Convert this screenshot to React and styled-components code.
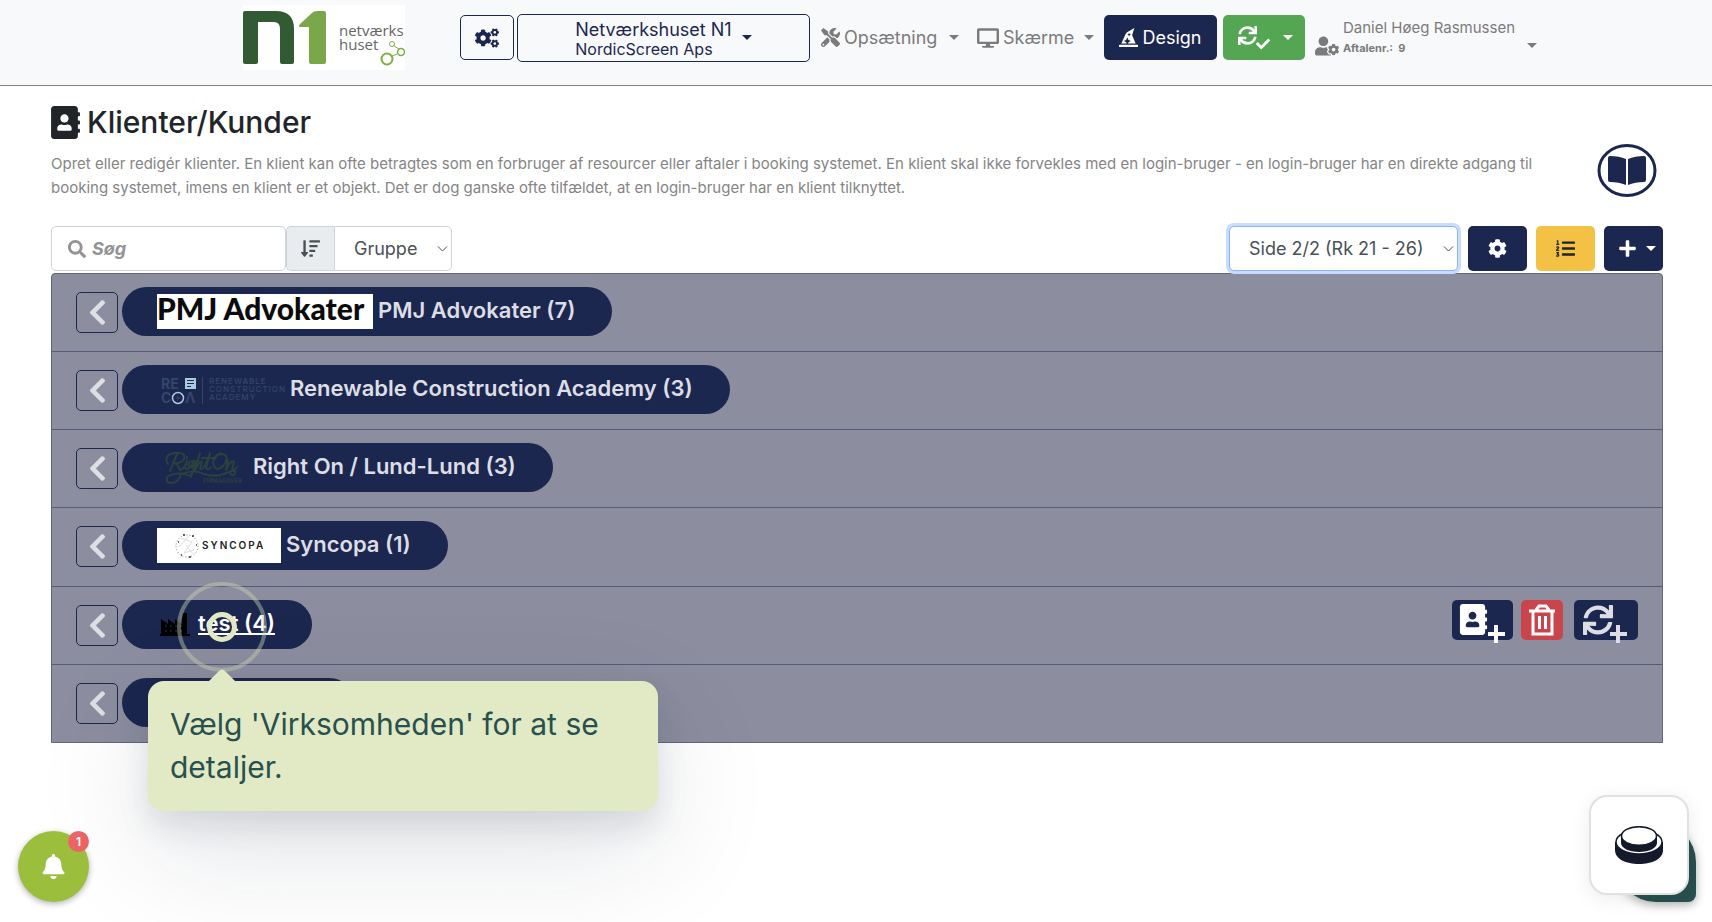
import React from "react";
import styled, { createGlobalStyle } from "styled-components";
import {
  FaCogs,
  FaCog,
  FaTools,
  FaDesktop,
  FaHatWizard,
  FaUserCog,
  FaCheck,
  FaSync,
  FaAddressBook,
  FaSortAmountDown,
  FaListOl,
  FaPlus,
  FaChevronLeft,
  FaBell,
  FaSearch
} from "react-icons/fa";

const navy = "#1c2750";

const GlobalStyle = createGlobalStyle`
  * {
    box-sizing: border-box;
  }
  body {
    margin: 0;
    background: #fff;
    color: #212529;
    font-family: Inter, "Liberation Sans", sans-serif;
    font-size: 16px;
    line-height: 24px;
  }
  button, select, input {
    font-family: inherit;
    margin: 0;
  }
  svg {
    display: block;
    flex: none;
  }
`;
const Page = styled.div`
  position: relative;
  min-height: 100vh;
  overflow: hidden;
`;
const Header = styled.header`
  display: flex;
  align-items: flex-start;
  height: 86px;
  padding: 5px 16px 0 243px;
  background: #f8f9fb;
  border-bottom: 1px solid #808183;
`;
const Brand = styled.a`
  width: 162px;
  height: 65px;
  margin-right: 55px;
  background: #fff;
`;
const Bar = styled.nav`
  display: flex;
  align-items: center;
  height: 65px;
`;
const OutlineBtn = styled.button`
  display: flex;
  align-items: center;
  justify-content: center;
  width: ${props => props.$width}px;
  height: ${props => props.$height}px;
  margin-right: 3px;
  padding: 0;
  color: ${navy};
  background: transparent;
  border: 1px solid ${navy};
  border-radius: 5px;
`;
const Company = styled.span`
  padding-top: 2px;
  font-size: 18px;
  line-height: 20px;
  text-align: left;
`;
const CompanySub = styled.span`
  display: block;
  font-size: 16px;
  line-height: 18px;
`;
const Caret = styled.span`
  display: block;
  flex: none;
  width: 10px;
  border: 5px solid transparent;
  border-top-color: currentColor;
  border-bottom: 0;
  margin-left: ${props => props.$gap || 0}px;
`;
const MenuLink = styled.a`
  display: flex;
  align-items: center;
  gap: 4px;
  width: ${props => props.$width}px;
  margin-left: ${props => props.$before}px;
  color: #7b7b7b;
  font-size: 18px;
  text-decoration: none;
`;
const SolidBtn = styled.button`
  display: flex;
  align-items: center;
  justify-content: center;
  gap: 4px;
  width: ${props => props.$width || 59}px;
  height: 45px;
  padding: 0 0 0 ${props => props.$inset || 0}px;
  color: ${props => props.$color || "#fff"};
  background: ${props => props.$bg || navy};
  border: 0;
  border-radius: 5px;
  font-size: 18px;
`;
const NavActions = styled.div`
  display: flex;
  gap: 6px;
  margin: 0 10px 0 11px;
`;
const User = styled.a`
  display: flex;
  align-items: flex-end;
  gap: 4px;
  color: #7b7b7b;
  font-size: 15px;
  line-height: 20px;
  text-decoration: none;
`;
const UserNr = styled.b`
  display: block;
  font-size: 11px;
`;
const UserCaret = styled.span`
  padding: 0 0 10px 8px;
`;
const Main = styled.main`
  padding: 16px 49px 0 51px;
`;
const Title = styled.h1`
  display: flex;
  align-items: center;
  gap: 7px;
  margin: 0;
  font-size: 30px;
  font-weight: 500;
  line-height: 40px;
  svg {
    width: 29px;
    height: 33px;
  }
`;
const Intro = styled.div`
  display: flex;
  justify-content: space-between;
  height: 84px;
  padding: 2px 6px 0 0;
`;
const Lead = styled.p`
  flex: 1;
  max-width: 1530px;
  margin: 8px 0 0;
  color: #858585;
  font-size: 15px;
`;
const Toolbar = styled.div`
  display: flex;
  align-items: center;
  height: 45px;
  margin-bottom: 2px;
`;
const SearchBox = styled.label`
  display: flex;
  align-items: center;
  gap: 6px;
  width: 235px;
  height: 45px;
  padding: 0 16px;
  color: #939393;
  border: 1px solid #ced4da;
  border-radius: 5px;
`;
const SearchInput = styled.input`
  width: 100%;
  padding: 0;
  border: 0;
  outline: 0;
  background: transparent;
  font-size: 18px;
  &::placeholder {
    color: #939393;
    font-style: italic;
    font-weight: 700;
  }
`;
const SortLabel = styled.label`
  display: flex;
  align-items: center;
  justify-content: center;
  width: 48px;
  height: 45px;
  color: #495057;
  background: #e9ecef;
  border: 1px solid #ced4da;
  border-right: 0;
  border-radius: 5px 0 0 5px;
`;
const SelectWrap = styled.span`
  position: relative;
  width: ${props => props.$width}px;
  margin-left: ${props => (props.$push ? "auto" : 0)};
  margin-right: ${props => (props.$push ? 10 : 0)}px;
  svg {
    position: absolute;
    right: 4px;
    top: 19px;
    pointer-events: none;
  }
`;
const Select = styled.select`
  appearance: none;
  width: 100%;
  height: 45px;
  padding: 0 19px;
  color: #495057;
  background: #fff;
  border: 1px solid ${props => (props.$active ? "#86b7fe" : "#ced4da")};
  border-radius: ${props => (props.$active ? "5px" : "0 5px 5px 0")};
  box-shadow: ${props => (props.$active ? "0 0 0 3px #c9dcfc" : "none")};
  outline: 0;
  font-size: 18px;
  vertical-align: top;
`;
const Tools = styled.div`
  display: flex;
  gap: 9px;
`;
const List = styled.ul`
  margin: 0;
  padding: 0;
  list-style: none;
  background: #8c8e9f;
  border: 1px solid #62657f;
  border-radius: 4px 4px 0 0;
`;
const Row = styled.li`
  display: flex;
  align-items: flex-start;
  min-height: 77px;
  padding: 13px 24px;
  & + & {
    min-height: 78px;
    border-top: 1px solid #565a79;
  }
  &&:nth-child(4n) {
    min-height: 79px;
  }
`;
const BackBtn = styled.button`
  display: flex;
  align-items: center;
  justify-content: center;
  width: 42px;
  height: 41px;
  margin: 5px 4px 0 0;
  padding: 0;
  color: #dedfe4;
  background: transparent;
  border: 1px solid ${navy};
  border-radius: 5px;
`;
const Pill = styled.a`
  display: flex;
  align-items: center;
  height: 49px;
  width: ${props => (props.$width ? props.$width + "px" : "auto")};
  padding: 0 37px 0 35px;
  border-radius: 25px;
  background: ${navy};
  color: ${props => (props.$active ? "#fff" : "#dddee5")};
  font-size: 22px;
  font-weight: 600;
  text-decoration: ${props => (props.$active ? "underline" : "none")};
`;
const PillText = styled.span`
  margin-left: 5px;
  padding-bottom: 3px;
  white-space: nowrap;
`;
const RowActions = styled.div`
  display: flex;
  gap: 8px;
  margin-left: auto;
  button + button + button {
    margin-left: 3px;
  }
`;
const ActionBtn = styled.button`
  width: ${props => props.$width}px;
  height: 40px;
  padding: 0;
  background: ${props => (props.$danger ? "#c9454b" : navy)};
  border: 0;
  border-radius: 5px;
  svg {
    overflow: visible;
  }
`;
const Tour = styled.div`
  position: absolute;
  left: 148px;
  top: 681px;
  width: 510px;
  padding: 22px;
  color: #28504f;
  background: #e2eac5;
  border-radius: 16px;
  box-shadow: 0 16px 32px rgba(20, 30, 60, 0.12), 0 40px 120px rgba(20, 30, 60, 0.12);
  font-size: 30px;
  line-height: 43px;
`;
const TourArrow = styled.svg`
  position: absolute;
  left: 60px;
  top: -12px;
`;
const Pulse = styled.span`
  position: absolute;
  left: ${props => 222 - props.$size / 2}px;
  top: ${props => 627 - props.$size / 2}px;
  width: ${props => props.$size}px;
  height: ${props => props.$size}px;
  border: ${props => props.$line}px solid ${props => props.$color};
  border-radius: 50%;
  pointer-events: none;
`;
const BellBtn = styled.button`
  position: absolute;
  left: 18px;
  bottom: 20px;
  display: flex;
  align-items: center;
  justify-content: center;
  width: 71px;
  height: 71px;
  padding: 0;
  color: #fff;
  background: #9bbe3c;
  border: 0;
  border-radius: 50%;
  box-shadow: 0 2px 6px rgba(0, 0, 0, 0.3);
`;
const Badge = styled.span`
  position: absolute;
  right: 0;
  top: 0;
  width: 21px;
  height: 21px;
  border-radius: 50%;
  background: #ea6464;
  font-size: 12px;
  font-weight: 600;
  line-height: 21px;
`;
const ChatBtn = styled.button`
  position: absolute;
  right: 16px;
  bottom: 20px;
  width: 80px;
  height: 80px;
  background: #28504f;
  border: 0;
  border-radius: 50px 50px 10px 50px;
  box-shadow: 0 3px 10px rgba(0, 0, 0, 0.3);
`;
const WidgetBtn = styled.button`
  position: absolute;
  right: 23px;
  bottom: 27px;
  display: flex;
  align-items: center;
  justify-content: center;
  width: 100px;
  height: 100px;
  padding: 0;
  background: #fff;
  border: 2px solid #e1e1e2;
  border-radius: 18px;
  box-shadow: 0 4px 20px rgba(0, 0, 0, 0.08);
`;

const BrandLogo = () => (
  <svg width="162" height="65" viewBox="0 0 162 65">
    <path
      d="M0 8Q0 6 2 6H33Q51 6 51 24V57Q51 59 49 59H39Q37 59 37 57V24Q37 17 31 17H15V57Q15 59 13 59H2Q0 59 0 57Z"
      fill="#335b33"
    />
    <path
      d="M57 22Q55 22 57 19L69 8Q71 6 74 6H81Q83 6 83 8V57Q83 59 81 59H68Q66 59 66 57V22Z"
      fill="#7ba74b"
    />
    <g fontFamily="Open Sans" fontSize="15" fill="#666">
      <text x="96" y="31">netværks</text>
      <text x="96" y="45">huset</text>
    </g>
    <g fill="none" stroke="#7fae45">
      <circle cx="144" cy="54" r="5.500" strokeWidth="2" />
      <circle cx="158" cy="47" r="3.500" strokeWidth="1.500" />
      <circle cx="149" cy="39" r="2.500" />
      <path d="M149 51L154 49M151 41L156 44" />
    </g>
  </svg>
);
const ChevronDown = () => (
  <svg width="11" height="8" viewBox="0 0 11 8" fill="none" stroke="#495057">
    <path d="M1 1.500L5.500 6L10 1.500" />
  </svg>
);
const BookBadge = () => (
  <svg width="60" height="54" viewBox="0 0 60 54">
    <ellipse cx="30" cy="26.500" rx="28" ry="25" fill="none" stroke={navy} strokeWidth="3" />
    <path
      d="M29 15Q22 12 13 12Q11 12 11 14V36Q11 38 13 38Q22 38 29 41ZM31 15Q38 12 47 12Q49 12 49 14V36Q49 38 47 38Q38 38 31 41Z"
      fill={navy}
    />
  </svg>
);
const SyncCheck = () => (
  <svg width="33" height="26" viewBox="0 0 33 26">
    <FaSync size={19} y={1} />
    <FaCheck size={14} x={18} y={12} />
  </svg>
);
const PmjLogo = () => (
  <svg width="216" height="35" viewBox="0 0 216 35">
    <path d="M0 0H216V35H0Z" fill="#fff" />
    <text x="0" y="26" fontSize="30" fontWeight="900" fontFamily="Lato" fill="#0b0b0b">
      PMJ Advokater
    </text>
  </svg>
);
const RecoaLogo = () => (
  <svg width="128" height="35" viewBox="0 0 128 35">
    <g fontWeight="700" fontSize="14" fill="#35456a">
      <text x="4" y="17">RE</text>
      <text x="4" y="31">C</text>
      <text x="28" y="31">Λ</text>
    </g>
    <g fontSize="8" fontWeight="500" letterSpacing="1" fill="#35456a">
      <text x="52" y="12">RENEWABLE</text>
      <text x="52" y="20">CONSTRUCTION</text>
      <text x="52" y="28">ACADEMY</text>
    </g>
    <path d="M45.500 5V32" stroke="#35456a" />
    <path d="M28 6H39V17H28Z" fill="#a9cbe0" />
    <path d="M30 8.500H37M30 11.500H37M30 14.500H34" stroke={navy} />
    <circle cx="21" cy="26" r="5.500" fill="none" stroke="#a9cbe0" strokeWidth="1.500" />
    <path d="M21 23.500V28.500M18.500 26H23.500" stroke="#35456a" />
  </svg>
);
const RightOnLogo = () => (
  <svg width="91" height="35" viewBox="0 0 91 35">
    <g fill="none" stroke="#2b413b" strokeWidth="2" strokeLinecap="round" strokeLinejoin="round">
      <path d="M13 21L20 4M11 14Q6 5 17 3Q30 2 27 9Q24 14 17 13Q21 14 23 20Q27 20 30 11L28 18Q31 22 37 11Q30 11 32 17Q36 19 39 11L34 27M43 3L38 20Q43 10 45 12L43 19Q47 21 53 3L49 18Q51 21 54 17M45 8H58M64 3Q54 7 57 16Q60 22 67 15Q73 5 65 4Q60 4 58 9M71 10L69 20Q74 9 77 12L75 19Q77 21 80 17M30 7V8" />
      <path d="M34 26Q20 21 11 26Q7 33 15 33Q22 32 24 24Q38 19 47 24Q60 28 72 22Q80 19 78 24Q75 27 73 23" />
    </g>
    <text x="46" y="33" fontSize="6" fontWeight="600" fill="#2b413b">FIRMAGAVER</text>
  </svg>
);
const SyncopaLogo = () => (
  <svg width="124" height="35" viewBox="0 0 124 35">
    <path d="M0 0H124V35H0Z" fill="#fff" />
    <circle cx="30" cy="18" r="11" fill="none" stroke="#888" strokeDasharray="1 2" />
    <path d="M24 10L35 14L27 25L37 22M22 19L32 8M29 17L36 26" fill="none" stroke="#ddd" />
    <path d="M26 7H28M35 8H37M21 14H22M39 17H40M32 29H34M24 27H25" stroke="#333" strokeWidth="1.500" />
    <text x="45" y="21" fontSize="10" fontWeight="600" letterSpacing="2" fill="#222">SYNCOPA</text>
  </svg>
);
const FactoryLogo = () => (
  <svg width="36" height="35" viewBox="0 0 36 35">
    <path d="M4 27V12L11 17V12L18 17V12L25 17V6H30V27H33V29H3V27Z" fill="#000" />
    <path
      d="M8 19H10M13 19H15M18 19H20M23 19H25M8 24H10M13 24H15M18 24H20M23 24H25"
      stroke="#131a38"
      strokeWidth="2"
    />
  </svg>
);
const AddClientIcon = () => (
  <svg width="61" height="40" viewBox="0 0 61 40">
    <FaAddressBook size={31} x={6} y={4} color="#fff" />
    <path d="M44 25V43M36 34H53" stroke="#fff" strokeWidth="4" />
  </svg>
);
const TrashIcon = () => (
  <svg width="42" height="40" viewBox="0 0 42 40" fill="none" stroke="#fff" strokeWidth="3">
    <path d="M8 11H34M12 11V34H31V11M15 10L18 6H25L28 10M18.500 16V29M24.500 16V29" />
  </svg>
);
const AddSyncIcon = () => (
  <svg width="64" height="40" viewBox="0 0 64 40">
    <FaSync size={30} x={9} y={5} color="#dddee5" />
    <path d="M44 25V43M36 34H53" stroke="#dddee5" strokeWidth="4" />
  </svg>
);
const PuckIcon = () => (
  <svg width="48" height="39" viewBox="0 0 48 39">
    <path d="M0 16V24C0 33 11 38 24 38S48 33 48 24V16Z" fill="#141a2b" />
    <ellipse cx="24" cy="16" rx="23" ry="12" fill="#fff" stroke="#141a2b" strokeWidth="1.500" />
    <path d="M6 11V17C6 22 14 26 24 26S42 22 42 17V11Z" fill="#141a2b" />
    <ellipse cx="24" cy="10" rx="17.500" ry="9.300" fill="#fff" stroke="#141a2b" strokeWidth="1.500" />
  </svg>
);

const groups = [
  { name: "PMJ Advokater (7)", logo: <PmjLogo /> },
  { name: "Renewable Construction Academy (3)", logo: <RecoaLogo /> },
  { name: "Right On / Lund-Lund (3)", logo: <RightOnLogo /> },
  { name: "Syncopa (1)", logo: <SyncopaLogo /> },
  { name: "test (4)", logo: <FactoryLogo />, active: true },
  { name: "", width: 232 }
];

const Group = ({ group }) => (
  <Row>
    <BackBtn aria-label="Tilbage">
      <FaChevronLeft size={29} />
    </BackBtn>
    <Pill href="#gruppe" $active={group.active} $width={group.width}>
      {group.logo}
      <PillText>{group.name}</PillText>
    </Pill>
    {group.active && (
      <RowActions>
        <ActionBtn $width={61} aria-label="Tilføj klient">
          <AddClientIcon />
        </ActionBtn>
        <ActionBtn $width={42} $danger aria-label="Slet">
          <TrashIcon />
        </ActionBtn>
        <ActionBtn $width={64} aria-label="Tilføj synkronisering">
          <AddSyncIcon />
        </ActionBtn>
      </RowActions>
    )}
  </Row>
);

const App = () => (
  <Page>
    <GlobalStyle />
    <Header>
      <Brand href="#hjem" aria-label="Netværkshuset">
        <BrandLogo />
      </Brand>
      <Bar>
        <OutlineBtn $width={54} $height={45} aria-label="Indstillinger">
          <FaCogs size={24} />
        </OutlineBtn>
        <OutlineBtn $width={293} $height={48}>
          <Company>
            Netværkshuset N1
            <CompanySub>NordicScreen Aps</CompanySub>
          </Company>
          <Caret $gap={10} />
        </OutlineBtn>
        <MenuLink href="#opsaetning" $before={8} $width={137}>
          <FaTools size={19} />
          Opsætning
          <Caret $gap={8} />
        </MenuLink>
        <MenuLink href="#skaerme" $before={19} $width={116}>
          <FaDesktop size={22} />
          Skærme
          <Caret $gap={6} />
        </MenuLink>
        <NavActions>
          <SolidBtn $width={113}>
            <FaHatWizard size={19} />
            Design
          </SolidBtn>
          <SolidBtn $width={82} $inset={2} $bg="#54a652" aria-label="Synkroniser">
            <SyncCheck />
            <Caret $gap={8} />
          </SolidBtn>
        </NavActions>
        <User href="#bruger">
          <FaUserCog size={24} />
          <span>
            Daniel Høeg Rasmussen
            <UserNr>Aftalenr.:&nbsp; 9</UserNr>
          </span>
          <UserCaret>
            <Caret />
          </UserCaret>
        </User>
      </Bar>
    </Header>
    <Main>
      <Title>
        <FaAddressBook viewBox="0 0 448 512" />
        Klienter/Kunder
      </Title>
      <Intro>
        <Lead>
          Opret eller redigér klienter. En klient kan ofte betragtes som en forbruger af resourcer
          eller aftaler i booking systemet. En klient skal ikke forvekles med en login-bruger - en
          login-bruger har en direkte adgang til booking systemet, imens en klient er et objekt. Det
          er dog ganske ofte tilfældet, at en login-bruger har en klient tilknyttet.
        </Lead>
        <BookBadge />
      </Intro>
      <Toolbar>
        <SearchBox>
          <FaSearch size={18} />
          <SearchInput placeholder="Søg" aria-label="Søg" />
        </SearchBox>
        <SortLabel htmlFor="sort" aria-label="Sortering">
          <FaSortAmountDown size={19} />
        </SortLabel>
        <SelectWrap $width={118}>
          <Select id="sort">
            <option>Gruppe</option>
          </Select>
          <ChevronDown />
        </SelectWrap>
        <SelectWrap $width={229} $push>
          <Select $active aria-label="Side">
            <option>Side 2/2 (Rk 21 - 26)</option>
          </Select>
          <ChevronDown />
        </SelectWrap>
        <Tools>
          <SolidBtn aria-label="Indstillinger">
            <FaCog size={19} />
          </SolidBtn>
          <SolidBtn $bg="#f3c244" $color="#212529" aria-label="Rækkefølge">
            <FaListOl size={19} />
          </SolidBtn>
          <SolidBtn $inset={6} aria-label="Tilføj">
            <FaPlus size={19} />
            <Caret $gap={5} />
          </SolidBtn>
        </Tools>
      </Toolbar>
      <List>
        {groups.map((group, index) => (
          <Group key={index} group={group} />
        ))}
      </List>
    </Main>
    <Pulse $size={90} $line={4} $color="rgba(200, 208, 180, 0.45)" />
    <Pulse $size={30} $line={5} $color="#e2eac5" />
    <Tour role="dialog">
      <TourArrow width="28" height="13" viewBox="0 0 28 13">
        <path d="M0 13L11 2Q14 -1 17 2L28 13Z" fill="#e2eac5" />
      </TourArrow>
      Vælg 'Virksomheden' for at se detaljer.
    </Tour>
    <BellBtn aria-label="Notifikationer">
      <FaBell size={25} />
      <Badge>1</Badge>
    </BellBtn>
    <ChatBtn aria-label="Chat" />
    <WidgetBtn aria-label="Hjælp">
      <PuckIcon />
    </WidgetBtn>
  </Page>
);
export default App;
